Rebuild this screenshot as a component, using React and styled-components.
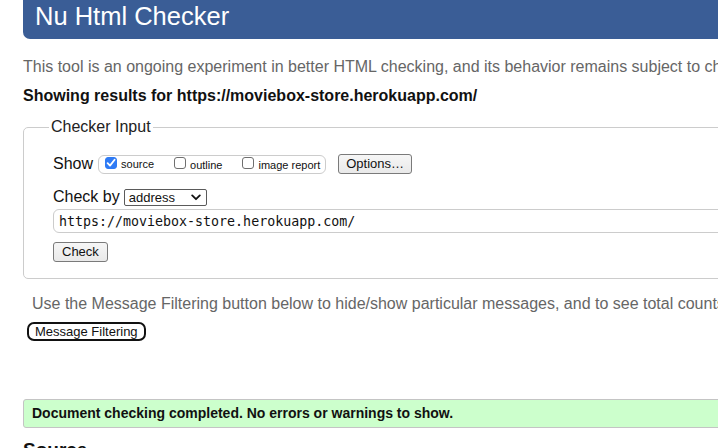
import React from "react";
import styled, { createGlobalStyle } from "styled-components";

const Global = createGlobalStyle`
  html, body {
    margin: 0;
    padding: 0;
    overflow: hidden;
    background: #ffffff;
    font-family: "Liberation Sans", Arial, Helvetica, sans-serif;
  }
  * { box-sizing: border-box; }
`;

const Page = styled.div`
  width: 1000px;
  display: flex;
  flex-direction: column;
  align-items: stretch;
  padding-left: 23px;
`;

const Header = styled.h1`
  margin: 0;
  height: 39px;
  padding-left: 12px;
  background: #3a5d96;
  color: #ffffff;
  font-size: 25.5px;
  font-weight: normal;
  line-height: 32px;
  border-bottom-left-radius: 7px;
`;

const Intro = styled.p`
  margin: 18px 0 0;
  font-size: 16px;
  line-height: 20px;
  color: #666666;
  white-space: nowrap;
`;

const ResultsFor = styled.p`
  margin: 9px 0 0;
  font-size: 16px;
  line-height: 20px;
  font-weight: bold;
  color: #111111;
  white-space: nowrap;
`;

const Fieldset = styled.fieldset`
  margin: 11px 0 0;
  border: 1px solid #cccccc;
  border-radius: 5px;
  padding: 0 0 16px 29px;
  min-width: 0;
`;

const Legend = styled.legend`
  margin-left: -4px;
  padding: 0 2px;
  font-size: 16px;
  line-height: 20px;
  color: #222222;
`;

const Row = styled.div`
  display: flex;
  align-items: center;
  height: ${(p) => p.$h}px;
  margin-top: ${(p) => p.$mt}px;
`;

const Label = styled.span`
  font-size: 16px;
  line-height: 20px;
  color: #111111;
`;

const Group = styled.div`
  display: flex;
  align-items: flex-start;
  gap: 20px;
  height: 19px;
  margin-left: 5px;
  padding: 1px 5px 0 6px;
  border: 1px solid #cccccc;
  border-radius: 6px;
`;

const Option = styled.label`
  display: flex;
  align-items: baseline;
  gap: 4px;
  font-size: 11px;
  line-height: 12px;
  color: #111111;
`;

const Box = styled.span`
  display: flex;
  align-items: center;
  justify-content: center;
  width: 12px;
  height: 12px;
  border-radius: 3px;
  border: 1px solid ${(p) => (p.$checked ? "#2f7bf5" : "#6f6f6f")};
  background: ${(p) => (p.$checked ? "#2f7bf5" : "#ffffff")};
`;

const Button = styled.button`
  margin: 0 0 0 ${(p) => p.$ml || 0}px;
  height: 20px;
  padding: 0 ${(p) => p.$px}px;
  font-family: "Liberation Sans", Arial, sans-serif;
  font-size: 13px;
  line-height: 18px;
  color: #111111;
  background: linear-gradient(#f6f6f6, #e9e9e9);
  border: 1px solid #7a7a7a;
  border-radius: 3px;
`;

const Select = styled.div`
  display: flex;
  align-items: center;
  justify-content: space-between;
  width: 83px;
  height: 17px;
  margin-left: 4px;
  padding: 0 5px 0 4px;
  border: 1px solid #5a5a5a;
  border-radius: 2px;
  background: #ffffff;
  font-size: 13px;
  line-height: 15px;
  color: #111111;
`;

const UrlInput = styled.div`
  margin-top: 3px;
  height: 24px;
  padding-left: 5px;
  display: flex;
  align-items: center;
  border: 1px solid #cccccc;
  border-radius: 6px;
  font-family: "DejaVu Sans Mono", Menlo, monospace;
  font-size: 13.3px;
  color: #111111;
  white-space: nowrap;
`;

const CheckRow = styled.div`
  margin-top: 9px;
  display: flex;
`;

const Hint = styled.p`
  margin: 15px 0 0;
  padding-left: 9px;
  font-size: 16px;
  line-height: 20px;
  color: #666666;
  white-space: nowrap;
`;

const FilterButton = styled.button`
  align-self: flex-start;
  margin: 8px 0 0 4px;
  height: 19px;
  padding: 0 6px;
  font-family: "Liberation Sans", Arial, sans-serif;
  font-size: 13px;
  line-height: 15px;
  color: #111111;
  background: #ffffff;
  border: 2px solid #111111;
  border-radius: 7px;
`;

const Success = styled.div`
  margin-top: 58px;
  height: 29px;
  padding: 0 8px;
  background: #ccffcc;
  border: 1px solid #c4c4c4;
  border-radius: 3px;
  font-size: 14px;
  line-height: 27px;
  font-weight: bold;
  color: #111111;
  white-space: nowrap;
`;

const SourceHeading = styled.h2`
  margin: 10px 0 0;
  font-size: 19px;
  line-height: 23px;
  font-weight: bold;
  color: #111111;
`;

function Checkbox({ checked, children }) {
  return (
    <Option>
      <Box $checked={checked}>
        {checked && (
          <svg width="10" height="10" viewBox="0 0 10 10">
            <path d="M1.6 5.2 L4 7.6 L8.6 1.8" fill="none" stroke="#ffffff" strokeWidth="1.8" strokeLinecap="round" strokeLinejoin="round" />
          </svg>
        )}
      </Box>
      {children}
    </Option>
  );
}

export default function App() {
  return (
    <>
      <Global />
      <Page>
        <Header>Nu Html Checker</Header>
        <Intro>
          This tool is an ongoing experiment in better HTML checking, and its behavior remains subject to change
        </Intro>
        <ResultsFor>Showing results for https://moviebox-store.herokuapp.com/</ResultsFor>
        <Fieldset>
          <Legend>Checker Input</Legend>
          <Row $h={20} $mt={17}>
            <Label>Show</Label>
            <Group>
              <Checkbox checked>source</Checkbox>
              <Checkbox>outline</Checkbox>
              <Checkbox>image report</Checkbox>
            </Group>
            <Button $ml={12} $px={7}>Options…</Button>
          </Row>
          <Row $h={18} $mt={14}>
            <Label>Check by</Label>
            <Select>
              <span>address</span>
              <svg width="10" height="7" viewBox="0 0 10 7">
                <path d="M1.2 1.4 L5 5.2 L8.8 1.4" fill="none" stroke="#111111" strokeWidth="1.8" strokeLinecap="round" strokeLinejoin="round" />
              </svg>
            </Select>
          </Row>
          <UrlInput>https://moviebox-store.herokuapp.com/</UrlInput>
          <CheckRow>
            <Button $px={8}>Check</Button>
          </CheckRow>
        </Fieldset>
        <Hint>
          Use the Message Filtering button below to hide/show particular messages, and to see total counts of errors and warnings.
        </Hint>
        <FilterButton>Message Filtering</FilterButton>
        <Success>Document checking completed. No errors or warnings to show.</Success>
        <SourceHeading>Source</SourceHeading>
      </Page>
    </>
  );
}
